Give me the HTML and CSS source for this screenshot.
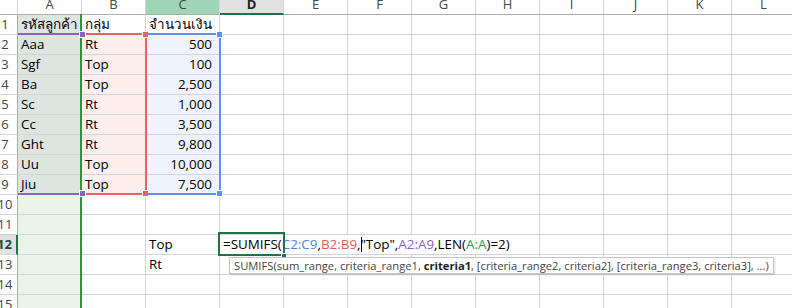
FILE: index.html
```html
<!DOCTYPE html>
<html lang="th">
<head>
  <meta charset="UTF-8">
  <title>SUMIFS</title>
  <link rel="stylesheet" href="styles.css">
</head>
<body>
  <div class="sheet">
    <div class="grid">
      <!-- หัวคอลัมน์ -->
      <div class="ch corner"></div><div class="ch">A</div><div class="ch">B</div><div class="ch hl">C</div><div class="ch on">D</div><div class="ch">E</div><div class="ch">F</div><div class="ch">G</div><div class="ch">H</div><div class="ch">I</div><div class="ch">J</div><div class="ch">K</div><div class="ch">L</div><div class="ch">M</div>
      <!-- 1 -->
      <div class="rh">1</div><div class="ra">รหัสลูกค้า</div><div>กลุ่ม</div><div>จำนวนเงิน</div><div></div><div></div><div></div><div></div><div></div><div></div><div></div><div></div><div></div><div></div>
      <!-- 2 -->
      <div class="rh">2</div><div class="ra">Aaa</div><div class="rb">Rt</div><div class="rc num">500</div><div></div><div></div><div></div><div></div><div></div><div></div><div></div><div></div><div></div><div></div>
      <!-- 3 -->
      <div class="rh">3</div><div class="ra">Sgf</div><div class="rb">Top</div><div class="rc num">100</div><div></div><div></div><div></div><div></div><div></div><div></div><div></div><div></div><div></div><div></div>
      <!-- 4 -->
      <div class="rh">4</div><div class="ra">Ba</div><div class="rb">Top</div><div class="rc num">2,500</div><div></div><div></div><div></div><div></div><div></div><div></div><div></div><div></div><div></div><div></div>
      <!-- 5 -->
      <div class="rh">5</div><div class="ra">Sc</div><div class="rb">Rt</div><div class="rc num">1,000</div><div></div><div></div><div></div><div></div><div></div><div></div><div></div><div></div><div></div><div></div>
      <!-- 6 -->
      <div class="rh">6</div><div class="ra">Cc</div><div class="rb">Rt</div><div class="rc num">3,500</div><div></div><div></div><div></div><div></div><div></div><div></div><div></div><div></div><div></div><div></div>
      <!-- 7 -->
      <div class="rh">7</div><div class="ra">Ght</div><div class="rb">Rt</div><div class="rc num">9,800</div><div></div><div></div><div></div><div></div><div></div><div></div><div></div><div></div><div></div><div></div>
      <!-- 8 -->
      <div class="rh">8</div><div class="ra">Uu</div><div class="rb">Top</div><div class="rc num">10,000</div><div></div><div></div><div></div><div></div><div></div><div></div><div></div><div></div><div></div><div></div>
      <!-- 9 -->
      <div class="rh">9</div><div class="ra">Jiu</div><div class="rb">Top</div><div class="rc num">7,500</div><div></div><div></div><div></div><div></div><div></div><div></div><div></div><div></div><div></div><div></div>
      <!-- 10 -->
      <div class="rh">10</div><div class="rA"></div><div></div><div></div><div></div><div></div><div></div><div></div><div></div><div></div><div></div><div></div><div></div><div></div>
      <!-- 11 -->
      <div class="rh">11</div><div class="rA"></div><div></div><div></div><div></div><div></div><div></div><div></div><div></div><div></div><div></div><div></div><div></div><div></div>
      <!-- 12 : เซลล์ที่กำลังแก้ไขสูตร -->
      <div class="rh on">12</div><div class="rA"></div><div></div><div>Top</div><div class="formula">=SUMIFS(<span class="blue">C2:C9</span>,<span class="red">B2:B9</span>,<span class="caret"></span>"Top",<span class="purple">A2:A9</span>,LEN(<span class="green">A:A</span>)=2)</div><div class="ov"></div><div class="ov"></div><div class="ov"></div><div></div><div></div><div></div><div></div><div></div><div></div>
      <!-- 13 -->
      <div class="rh">13</div><div class="rA"></div><div></div><div>Rt</div><div></div><div></div><div></div><div></div><div></div><div></div><div></div><div></div><div></div><div></div>
      <!-- 14 -->
      <div class="rh">14</div><div class="rA"></div><div></div><div></div><div></div><div></div><div></div><div></div><div></div><div></div><div></div><div></div><div></div><div></div>
      <!-- 15 -->
      <div class="rh">15</div><div class="rA"></div><div></div><div></div><div></div><div></div><div></div><div></div><div></div><div></div><div></div><div></div><div></div><div></div>
    </div>

    <!-- กรอบช่วงอ้างอิงในสูตร -->
    <div class="range range-a"></div>
    <div class="range range-p"><i class="hdl tr"></i><i class="hdl br"></i></div>
    <div class="range range-r"><i class="hdl tr"></i><i class="hdl br"></i></div>
    <div class="range range-b"><i class="hdl tr"></i><i class="hdl br"></i></div>

    <!-- เซลล์ที่ใช้งาน D12 -->
    <div class="active"><i class="fill"></i></div>

    <!-- คำแนะนำอาร์กิวเมนต์ -->
    <div class="tip">SUMIFS(sum_range, criteria_range1, <b>criteria1</b>, [criteria_range2, criteria2], [criteria_range3, criteria3], ...)</div>
  </div>
</body>
</html>
```

FILE: styles.css
```css
body {
  margin: 0;
  background: #fff;
  font-family: "Open Sans", "Noto Sans", sans-serif;
}
.sheet {
  position: relative;
  width: 792px;
  height: 308px;
  overflow: hidden;
}
.grid {
  display: grid;
  grid-template-columns: 18px 64px 64px 74px repeat(10, 64px);
  grid-template-rows: 15px repeat(15, 20px);
}
.grid > div {
  box-sizing: border-box;
  border-right: 1px solid #d4d4d4;
  border-bottom: 1px solid #d4d4d4;
  padding: 0 3px;
  font-size: 13.4px;
  line-height: 19px;
  color: #000;
  white-space: nowrap;
  overflow: hidden;
}

/* หัวคอลัมน์ / หัวแถว */
.grid > .ch {
  border-bottom-color: #ababab;
  text-align: center;
  font-size: 13px;
  color: #444;
  line-height: 9px;
  overflow: visible;
}
.grid > .ch.hl {
  background: #9fd5b7;
}
.grid > .ch.on {
  background: #e1e1e1;
  font-weight: bold;
  color: #222;
  border-bottom: 2px solid #217346;
}
.grid > .rh {
  display: flex;
  justify-content: center;
  padding: 0 7px 0 0;
  border-right-color: #ababab;
  font-size: 13px;
  color: #444;
  overflow: visible;
}
.grid > .rh.on {
  background: #e1e1e1;
  font-weight: bold;
  color: #1e4d33;
  border-right: 2px solid #217346;
}

/* สีพื้นช่วงข้อมูล */
.grid > .ra { background: #dde5e1; }
.grid > .rA { background: #e9f4e9; }
.grid > .rb { background: #fdeeee; }
.grid > .rc { background: #eef3fd; }
.grid > .num {
  text-align: right;
  padding-right: 7px;
}

/* สูตรที่ล้นออกไปทางขวา */
.grid > .formula {
  overflow: visible;
  border-right: none;
  position: relative;
  z-index: 1;
}
.grid > .ov {
  border-right: none;
}
.blue { color: #4e83e6; }
.red { color: #e05b5b; }
.purple { color: #8a62c6; }
.green { color: #2f9a42; }
.caret {
  display: inline-block;
  width: 1px;
  height: 15px;
  margin-right: -1px;
  background: #000;
  vertical-align: -3px;
}

/* กรอบช่วงอ้างอิง */
.range {
  position: absolute;
  box-sizing: border-box;
}
.range-a {
  left: 80px;
  top: 14px;
  width: 2px;
  height: 300px;
  background: #229a3a;
  z-index: 3;
}
.range-p {
  left: 18px;
  top: 33px;
  width: 64px;
  height: 162px;
  border-top: 2px solid #8a62c6;
  border-bottom: 2px solid #8a62c6;
  z-index: 4;
}
.range-r {
  left: 82px;
  top: 33px;
  width: 65px;
  height: 162px;
  border: 2px solid #e46464;
  border-left: none;
  z-index: 2;
}
.range-b {
  left: 146px;
  top: 33px;
  width: 75px;
  height: 162px;
  border: 2px solid #6191ea;
  border-left: none;
  z-index: 2;
}
.hdl {
  position: absolute;
  width: 5px;
  height: 5px;
  border: 1px solid #fff;
  right: -4px;
}
.hdl.tr { top: -4px; }
.hdl.br { bottom: -4px; }
.range-p .hdl { background: #8a62c6; }
.range-r .hdl { background: #e46464; }
.range-b .hdl { background: #6191ea; }

/* เซลล์ที่ใช้งาน */
.active {
  position: absolute;
  left: 218px;
  top: 232px;
  width: 67px;
  height: 24px;
  box-sizing: border-box;
  border: 2px solid #217346;
  z-index: 2;
}
.active .fill {
  position: absolute;
  right: -3px;
  bottom: -4px;
  width: 4px;
  height: 4px;
  background: #217346;
  border-left: 1px solid #fff;
  border-top: 1px solid #fff;
}

/* คำแนะนำ */
.tip {
  position: absolute;
  left: 229px;
  top: 257px;
  height: 17px;
  box-sizing: border-box;
  padding: 0 4px;
  border: 1px solid #c4c4c4;
  background: #fff;
  box-shadow: 1px 1px 2px rgba(0, 0, 0, 0.15);
  font-size: 11.2px;
  line-height: 15px;
  color: #444;
  white-space: nowrap;
  z-index: 5;
}
.tip b {
  color: #222;
}
```
